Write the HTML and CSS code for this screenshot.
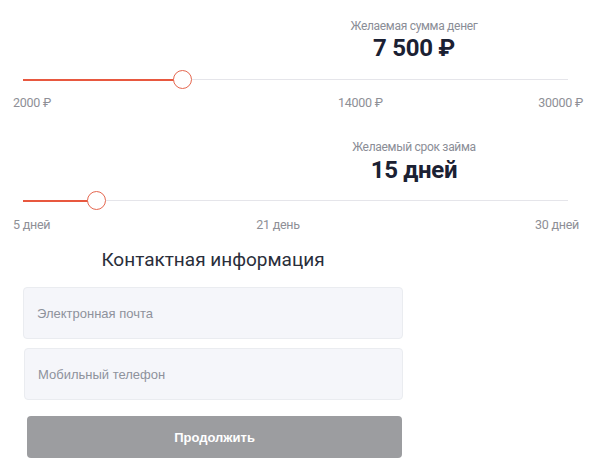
FILE: index.html
```html
<!DOCTYPE html>
<html>
<head>
    <meta charset="utf-8">
    <title>Заявка на займ</title>
    <link rel="stylesheet" href="styles.css">
</head>
<body>
    <div class="page">
        <!-- сумма -->
        <div class="slider-block">
            <div class="slider-head">
                <div class="slider-label">Желаемая сумма денег</div>
                <div class="slider-value">7 500 ₽</div>
            </div>
            <div class="track">
                <div class="track-fill fill-sum"></div>
                <div class="thumb thumb-sum"></div>
            </div>
            <div class="ticks">
                <span>2000 ₽</span>
                <span class="tick-mid mid-sum">14000 ₽</span>
                <span class="tick-end">30000 ₽</span>
            </div>
        </div>

        <!-- срок -->
        <div class="slider-block second">
            <div class="slider-head">
                <div class="slider-label">Желаемый срок займа</div>
                <div class="slider-value">15 дней</div>
            </div>
            <div class="track">
                <div class="track-fill fill-term"></div>
                <div class="thumb thumb-term"></div>
            </div>
            <div class="ticks ticks-term">
                <span>5 дней</span>
                <span class="tick-mid mid-term">21 день</span>
                <span class="tick-end">30 дней</span>
            </div>
        </div>

        <div class="contact">
            <h2>Контактная информация</h2>
            <input class="field" type="email" placeholder="Электронная почта">
            <input class="field field-phone" type="tel" placeholder="Мобильный телефон">
            <button class="submit" type="button">Продолжить</button>
        </div>
    </div>
</body>
</html>
```

FILE: styles.css
```css
body {
    margin: 0;
    background: #fff;
    font-family: Roboto, "Liberation Sans", Arial, sans-serif;
}
.page {
    width: 600px;
    padding-top: 18px;
}
.slider-head {
    padding-left: 228px;
    text-align: center;
}
.slider-label {
    font-size: 12px;
    line-height: 16px;
    color: #8a8d96;
    letter-spacing: -0.3px;
}
.slider-value {
    margin-top: 1px;
    font-size: 24px;
    line-height: 26px;
    font-weight: 700;
    color: #1b2133;
    letter-spacing: -0.3px;
}
.track {
    position: relative;
    height: 20px;
    margin: 9px 32px 0 23px;
}
.track::before {
    content: "";
    position: absolute;
    left: 0;
    right: 0;
    top: 9px;
    height: 1px;
    background: #e5e5ea;
}
.track-fill {
    position: absolute;
    left: 0;
    top: 9px;
    height: 2px;
    background: #e8583f;
}
.fill-sum { width: 152px; }
.fill-term { width: 66px; }
.thumb {
    position: absolute;
    top: 0;
    width: 17px;
    height: 17px;
    border: 1.5px solid #e5674f;
    border-radius: 50%;
    background: #fff;
}
.thumb-sum { left: 150px; }
.thumb-term { left: 64px; }
.ticks {
    display: flex;
    margin-top: 5px;
    padding: 0 17px 0 13px;
    font-size: 12.5px;
    line-height: 16px;
    color: #8e8f96;
    letter-spacing: -0.25px;
}
.ticks-term {
    margin-top: 6px;
    padding-right: 21px;
}
.mid-sum { margin-left: 287px; }
.mid-term { margin-left: 206px; }
.tick-end { margin-left: auto; }
.second {
    margin-top: 28px;
}
.second .slider-value {
    margin-top: 2px;
}
.second .track {
    margin-top: 8px;
}
.contact {
    width: 380px;
    margin: 15px 0 0 23px;
    display: flex;
    flex-direction: column;
}
.contact h2 {
    margin: 0 0 15px;
    font-size: 19px;
    line-height: 24px;
    font-weight: 400;
    text-align: center;
    color: #2a2e3a;
}
.field {
    box-sizing: border-box;
    height: 52px;
    padding: 0 13px;
    border: 1px solid #eaecf0;
    border-radius: 4px;
    background: #f5f6fa;
    font-family: "Liberation Sans", Arial, sans-serif;
    font-size: 13px;
    color: #2a2e3a;
    outline: none;
}
.field::placeholder {
    color: #8e929c;
}
.field-phone {
    margin: 9px 0 0 1px;
}
.submit {
    height: 42px;
    margin: 16px 1px 0 4px;
    border: none;
    border-radius: 4px;
    background: #9c9da0;
    color: #fff;
    font-family: "Liberation Sans", Arial, sans-serif;
    font-size: 13px;
    font-weight: 700;
    cursor: pointer;
}
```
